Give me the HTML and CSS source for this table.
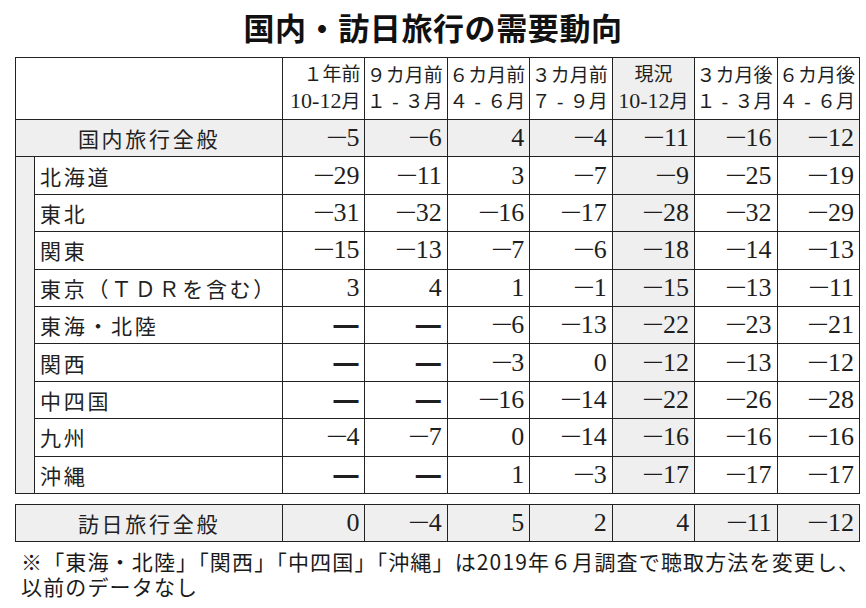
FILE: index.html
```html
<!DOCTYPE html>
<html lang="ja">
<head>
<meta charset="utf-8">
<title>国内・訪日旅行の需要動向</title>
<link rel="stylesheet" href="styles.css">
</head>
<body>
<div class="page">
  <h1 class="title">国内・訪日旅行の需要動向</h1>
  <table class="grid">
    <colgroup><col class="c-side"><col class="c-label"><col class="c-num"><col class="c-num"><col class="c-num"><col class="c-num"><col class="c-num"><col class="c-num"><col class="c-num"></colgroup>
    <thead>
      <tr class="head">
        <th colspan="2"></th>
        <th>１年前<br><span class="nar">10-12</span>月</th>
        <th>９カ月前<br>１<span class="hy">-</span>３月</th>
        <th>６カ月前<br>４<span class="hy">-</span>６月</th>
        <th>３カ月前<br>７<span class="hy">-</span>９月</th>
        <th class="now ctr">現況<br><span class="nar">10-12</span>月</th>
        <th>３カ月後<br>１<span class="hy">-</span>３月</th>
        <th>６カ月後<br>４<span class="hy">-</span>６月</th>
      </tr>
    </thead>
    <tbody>
      <tr class="total">
        <td colspan="2" class="label ctr">国内旅行全般</td>
        <td><span class="m">−</span>5</td><td><span class="m">−</span>6</td><td>4</td><td><span class="m">−</span>4</td><td class="now"><span class="m">−</span>11</td><td><span class="m">−</span>16</td><td><span class="m">−</span>12</td>
      </tr>
      <tr>
        <td class="side" rowspan="9"></td>
        <td class="label">北海道</td>
        <td><span class="m">−</span>29</td><td><span class="m">−</span>11</td><td>3</td><td><span class="m">−</span>7</td><td class="now"><span class="m">−</span>9</td><td><span class="m">−</span>25</td><td><span class="m">−</span>19</td>
      </tr>
      <tr>
        <td class="label">東北</td>
        <td><span class="m">−</span>31</td><td><span class="m">−</span>32</td><td><span class="m">−</span>16</td><td><span class="m">−</span>17</td><td class="now"><span class="m">−</span>28</td><td><span class="m">−</span>32</td><td><span class="m">−</span>29</td>
      </tr>
      <tr>
        <td class="label">関東</td>
        <td><span class="m">−</span>15</td><td><span class="m">−</span>13</td><td><span class="m">−</span>7</td><td><span class="m">−</span>6</td><td class="now"><span class="m">−</span>18</td><td><span class="m">−</span>14</td><td><span class="m">−</span>13</td>
      </tr>
      <tr>
        <td class="label">東京（ＴＤＲを含む）</td>
        <td>3</td><td>4</td><td>1</td><td><span class="m">−</span>1</td><td class="now"><span class="m">−</span>15</td><td><span class="m">−</span>13</td><td><span class="m">−</span>11</td>
      </tr>
      <tr>
        <td class="label">東海・北陸</td>
        <td class="na">━</td><td class="na">━</td><td><span class="m">−</span>6</td><td><span class="m">−</span>13</td><td class="now"><span class="m">−</span>22</td><td><span class="m">−</span>23</td><td><span class="m">−</span>21</td>
      </tr>
      <tr>
        <td class="label">関西</td>
        <td class="na">━</td><td class="na">━</td><td><span class="m">−</span>3</td><td>0</td><td class="now"><span class="m">−</span>12</td><td><span class="m">−</span>13</td><td><span class="m">−</span>12</td>
      </tr>
      <tr>
        <td class="label">中四国</td>
        <td class="na">━</td><td class="na">━</td><td><span class="m">−</span>16</td><td><span class="m">−</span>14</td><td class="now"><span class="m">−</span>22</td><td><span class="m">−</span>26</td><td><span class="m">−</span>28</td>
      </tr>
      <tr>
        <td class="label">九州</td>
        <td><span class="m">−</span>4</td><td><span class="m">−</span>7</td><td>0</td><td><span class="m">−</span>14</td><td class="now"><span class="m">−</span>16</td><td><span class="m">−</span>16</td><td><span class="m">−</span>16</td>
      </tr>
      <tr>
        <td class="label">沖縄</td>
        <td class="na">━</td><td class="na">━</td><td>1</td><td><span class="m">−</span>3</td><td class="now"><span class="m">−</span>17</td><td><span class="m">−</span>17</td><td><span class="m">−</span>17</td>
      </tr>
    </tbody>
  </table>
  <table class="grid visit">
    <colgroup><col class="c-side"><col class="c-label"><col class="c-num"><col class="c-num"><col class="c-num"><col class="c-num"><col class="c-num"><col class="c-num"><col class="c-num"></colgroup>
    <tbody>
      <tr class="total">
        <td colspan="2" class="label ctr">訪日旅行全般</td>
        <td>0</td><td><span class="m">−</span>4</td><td>5</td><td>2</td><td class="now">4</td><td><span class="m">−</span>11</td><td><span class="m">−</span>12</td>
      </tr>
    </tbody>
  </table>
  <div class="note">
    <span class="note-line">※「東海・北陸」「関西」「中四国」「沖縄」は2019年６月調査で聴取方法を変更し、</span>
    <span class="note-line">以前のデータなし</span>
  </div>
</div>
</body>
</html>
```

FILE: styles.css
```css
html, body {
  margin: 0;
  padding: 0;
  background: #ffffff;
}

body {
  width: 866px;
  height: 608px;
  overflow: hidden;
  color: #1a1a1a;
  font-family: "Noto Sans CJK JP", "Noto Sans", sans-serif;
}

.page {
  padding: 10px 0 0 15px;
}

.title {
  margin: 0 0 13px -15px;
  width: 866px;
  text-align: center;
  font-size: 31px;
  line-height: 34px;
  font-weight: 700;
  letter-spacing: 0.6px;
  color: #111;
}

.grid {
  border-collapse: collapse;
  table-layout: fixed;
  width: 844px;
}

.c-side { width: 19px; }
.c-label { width: 248px; }
.c-num { width: 82.43px; }

.grid th,
.grid td {
  border: 1.5px solid #222;
  padding: 0 5px 0 2px;
  text-align: right;
  white-space: nowrap;
}

.grid td {
  height: 36.4px;
  font-family: "Liberation Serif", "Noto Sans CJK JP", serif;
  font-size: 26px;
  line-height: 36px;
  color: #1e1e1e;
}

.m {
  display: inline-block;
  transform: scaleX(1.5);
  margin: 0 2px 0 3px;
}

.head th {
  height: 61px;
  padding-top: 0;
  padding-bottom: 0;
  font-family: "Liberation Serif", "Noto Sans CJK JP", serif;
  font-weight: 400;
  font-size: 19px;
  line-height: 26px;
  padding-right: 4px;
  padding-left: 0;
  color: #1e1e1e;
}

.nar {
  font-size: 22px;
}

.hy {
  display: inline-block;
  width: 19px;
  text-align: center;
}

.grid .ctr {
  text-align: center;
  padding-left: 0;
  padding-right: 0;
}

.now {
  background: #efefef;
}

.total td {
  background: #efefef;
}

.grid td.label {
  text-align: left;
  padding-left: 5px;
  font-family: "Noto Sans CJK JP", sans-serif;
  font-size: 21px;
  letter-spacing: 2.7px;
  color: #222;
}

.grid td.label.ctr {
  text-align: center;
  padding-left: 0;
}

.grid td.side {
  background: #efefef;
  padding: 0;
}

.grid td.na {
  font-family: "Noto Sans CJK JP", sans-serif;
  font-size: 25px;
  padding-right: 6px;
}

.visit {
  margin-top: 10px;
}

.note {
  margin: 7px 0 0 6px;
  font-size: 21px;
  letter-spacing: 1.15px;
  color: #1a1a1a;
}

.note-line {
  display: block;
  line-height: 25px;
}
```
